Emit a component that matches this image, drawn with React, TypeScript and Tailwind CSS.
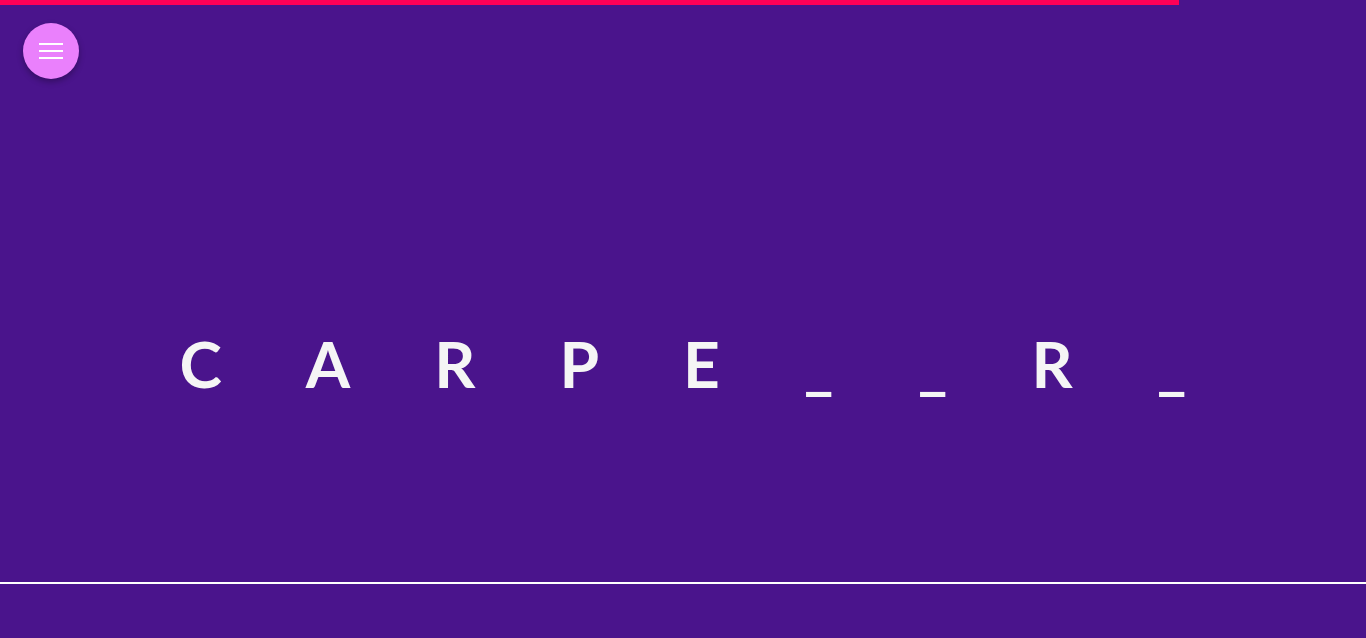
import React from "react";

export default function App() {
  const letters = ["C", "A", "R", "P", "E", "_", "_", "R", "_"];
  return (
    <div className="relative w-[1366px] h-[638px] bg-[#4a148c] overflow-hidden" style={{ fontFamily: "Lato, 'Open Sans', sans-serif" }}>
      <div className="absolute left-0 top-0 h-[5px] w-[1179px] bg-[#ff0057]" />
      <button className="absolute left-[23px] top-[23px] w-[56px] h-[56px] rounded-full bg-[#ea80fc] flex flex-col items-center justify-center gap-[5px] shadow-[0_3px_6px_rgba(0,0,0,0.3)]">
        <span className="block w-[24px] h-[2px] bg-white" />
        <span className="block w-[24px] h-[2px] bg-white" />
        <span className="block w-[24px] h-[2px] bg-white" />
      </button>
      <div className="flex flex-col h-[582px]">
        <div className="flex-1 flex items-center justify-center pt-[146px]">
          <h1 className="text-[64px] font-bold text-[#f5f5f5] leading-none tracking-[84px] pl-[84px]">
            {letters.join("")}
          </h1>
        </div>
      </div>
      <div className="h-[2px] w-full bg-white" />
    </div>
  );
}
